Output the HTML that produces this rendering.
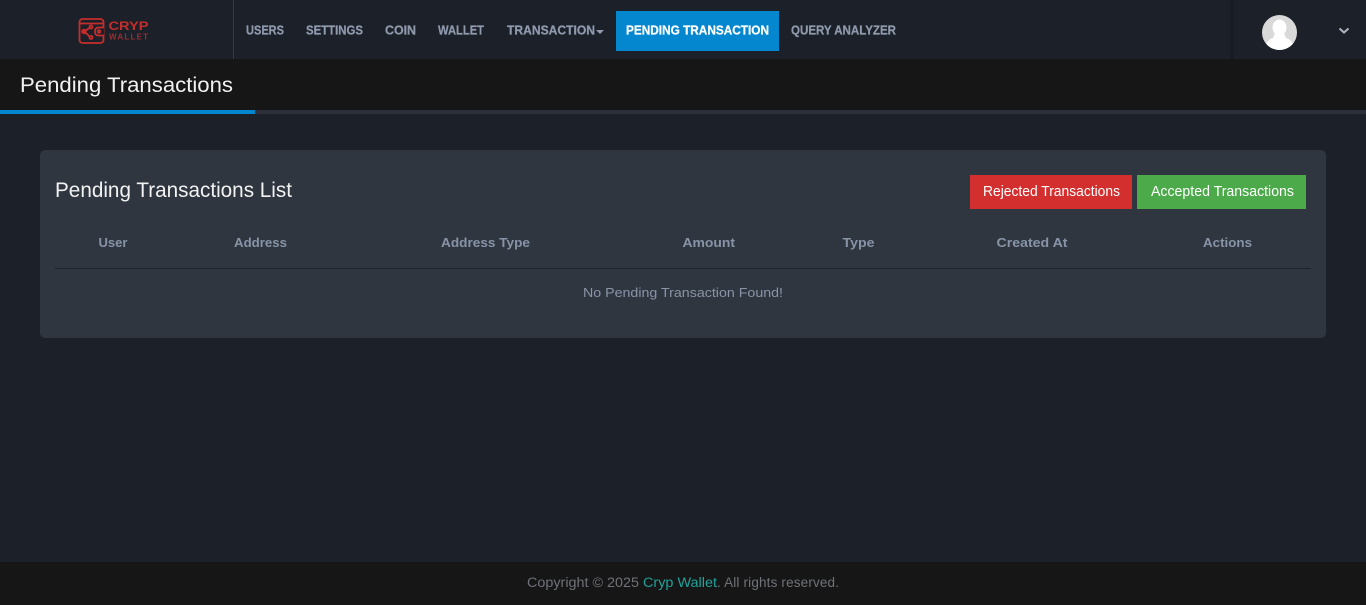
<!DOCTYPE html>
<html lang="en">
<head>
<meta charset="utf-8">
<title>Pending Transactions</title>
<style>
html,body{margin:0;padding:0;width:1366px;height:605px;overflow:hidden;background:#1c2029}
svg{display:block}
text{font-family:"Liberation Sans",Arial,sans-serif}
</style>
</head>
<body>
<svg width="1366" height="605" viewBox="0 0 1366 605" xmlns="http://www.w3.org/2000/svg">
  <rect width="1366" height="605" fill="#1c2029"/>
  <!-- header -->
  <rect x="233" y="0" width="1" height="59" fill="#343a46"/>
  <rect x="1231" y="0" width="2" height="59" fill="#171a22"/>
  <!-- logo -->
  <g fill="none" stroke="#c62e2b" stroke-width="1.800">
    <rect x="79.500" y="19" width="24" height="24" rx="3"/>
    <path d="M80 23.500 H103"/>
    <path d="M104 27.500 H98.500 Q95 27.500 95 31.500 Q95 35.500 98.500 35.500 H104" fill="#1c2029"/>
    <path d="M84.500 31.500 L90 27.500 M84.500 31.500 L90 37"/>
    <circle cx="84" cy="31.500" r="1.800" fill="#c62e2b"/>
    <circle cx="91" cy="27" r="1.500"/>
    <circle cx="91" cy="37.500" r="1.500"/>
    <circle cx="99" cy="31.500" r="1.300"/>
  </g>
  <text x="108.500" y="30" font-size="11.500" font-weight="700" fill="#c62e2b" textLength="40" lengthAdjust="spacingAndGlyphs">CRYP</text>
  <text x="109" y="39.500" font-size="8" font-weight="700" fill="#9e2d2d" textLength="39" lengthAdjust="spacing">WALLET</text>

  <!-- nav -->
  <g font-size="12.500" font-weight="700" fill="#8f9aad" stroke="#8f9aad" stroke-width="0.250">
    <text x="246" y="34.500" textLength="38" lengthAdjust="spacingAndGlyphs">USERS</text>
    <text x="306" y="34.500" textLength="57" lengthAdjust="spacingAndGlyphs">SETTINGS</text>
    <text x="385" y="34.500" textLength="31" lengthAdjust="spacingAndGlyphs">COIN</text>
    <text x="438" y="34.500" textLength="46" lengthAdjust="spacingAndGlyphs">WALLET</text>
    <text x="507" y="34.500" textLength="88" lengthAdjust="spacingAndGlyphs">TRANSACTION</text>
    <text x="791" y="34.500" textLength="105" lengthAdjust="spacingAndGlyphs">QUERY ANALYZER</text>
  </g>
  <path d="M596 30 H604 L600 34 Z" fill="#8f9aad"/>
  <rect x="616" y="11" width="163" height="40" fill="#0487cf"/>
  <text x="626" y="34.500" font-size="12.500" font-weight="700" fill="#fff" stroke="#fff" stroke-width="0.250" textLength="143" lengthAdjust="spacingAndGlyphs">PENDING TRANSACTION</text>

  <!-- avatar -->
  <circle cx="1279.500" cy="32.500" r="17.500" fill="#d9d9d9"/>
  <clipPath id="av"><circle cx="1279.500" cy="32.500" r="17.500"/></clipPath>
  <g clip-path="url(#av)" fill="#fff">
    <ellipse cx="1279.500" cy="27.500" rx="7" ry="8"/>
    <path d="M1275 33 H1284 L1286 38 Q1294 40 1295 52 H1264 Q1265 40 1273 38 Z"/>
  </g>
  <path d="M1339.500 28.500 L1344 32.500 L1348.500 28.500" fill="none" stroke="#aeb6c4" stroke-width="2"/>

  <!-- page title bar -->
  <rect x="0" y="59" width="1366" height="51" fill="#161616"/>
  <rect x="0" y="110" width="1366" height="4" fill="#2d303b"/>
  <rect x="0" y="110" width="255" height="4" fill="#0487cf"/>
  <text x="20" y="92" font-size="21" fill="#f0f0f0" textLength="213" lengthAdjust="spacingAndGlyphs">Pending Transactions</text>

  <!-- card -->
  <rect x="40" y="150" width="1286" height="188" rx="5" fill="#2f3640"/>
  <text x="55" y="197" font-size="21.500" fill="#f2f2f2" textLength="237" lengthAdjust="spacingAndGlyphs">Pending Transactions List</text>
  <rect x="970" y="175" width="162" height="34" fill="#d32f2f"/>
  <text x="983" y="196" font-size="14.500" fill="#fff" textLength="137" lengthAdjust="spacingAndGlyphs">Rejected Transactions</text>
  <rect x="1137" y="175" width="169" height="34" fill="#4caa4b"/>
  <text x="1151" y="196" font-size="14.500" fill="#fff" textLength="143" lengthAdjust="spacingAndGlyphs">Accepted Transactions</text>

  <g font-size="13" font-weight="700" fill="#8793a6">
    <text x="98.500" y="247" textLength="29" lengthAdjust="spacingAndGlyphs">User</text>
    <text x="234" y="247" textLength="53" lengthAdjust="spacingAndGlyphs">Address</text>
    <text x="441" y="247" textLength="89" lengthAdjust="spacingAndGlyphs">Address Type</text>
    <text x="682.500" y="247" textLength="52.500" lengthAdjust="spacingAndGlyphs">Amount</text>
    <text x="842.500" y="247" textLength="32" lengthAdjust="spacingAndGlyphs">Type</text>
    <text x="996.500" y="247" textLength="71" lengthAdjust="spacingAndGlyphs">Created At</text>
    <text x="1203" y="247" textLength="49" lengthAdjust="spacingAndGlyphs">Actions</text>
  </g>
  <rect x="55" y="268" width="1256" height="1" fill="#1e222b"/>
  <text x="583" y="297" font-size="13" fill="#8a94a6" textLength="200" lengthAdjust="spacingAndGlyphs">No Pending Transaction Found!</text>

  <!-- footer -->
  <rect x="0" y="562" width="1366" height="43" fill="#161616"/>
  <g font-size="13.500">
    <text x="527" y="587" fill="#6f7278" textLength="112" lengthAdjust="spacingAndGlyphs">Copyright © 2025</text>
    <text x="643" y="587" fill="#1fa39a" textLength="74" lengthAdjust="spacingAndGlyphs">Cryp Wallet</text>
    <text x="717" y="587" fill="#6f7278" textLength="122" lengthAdjust="spacing">. All rights reserved.</text>
  </g>
</svg>
</body>
</html>
